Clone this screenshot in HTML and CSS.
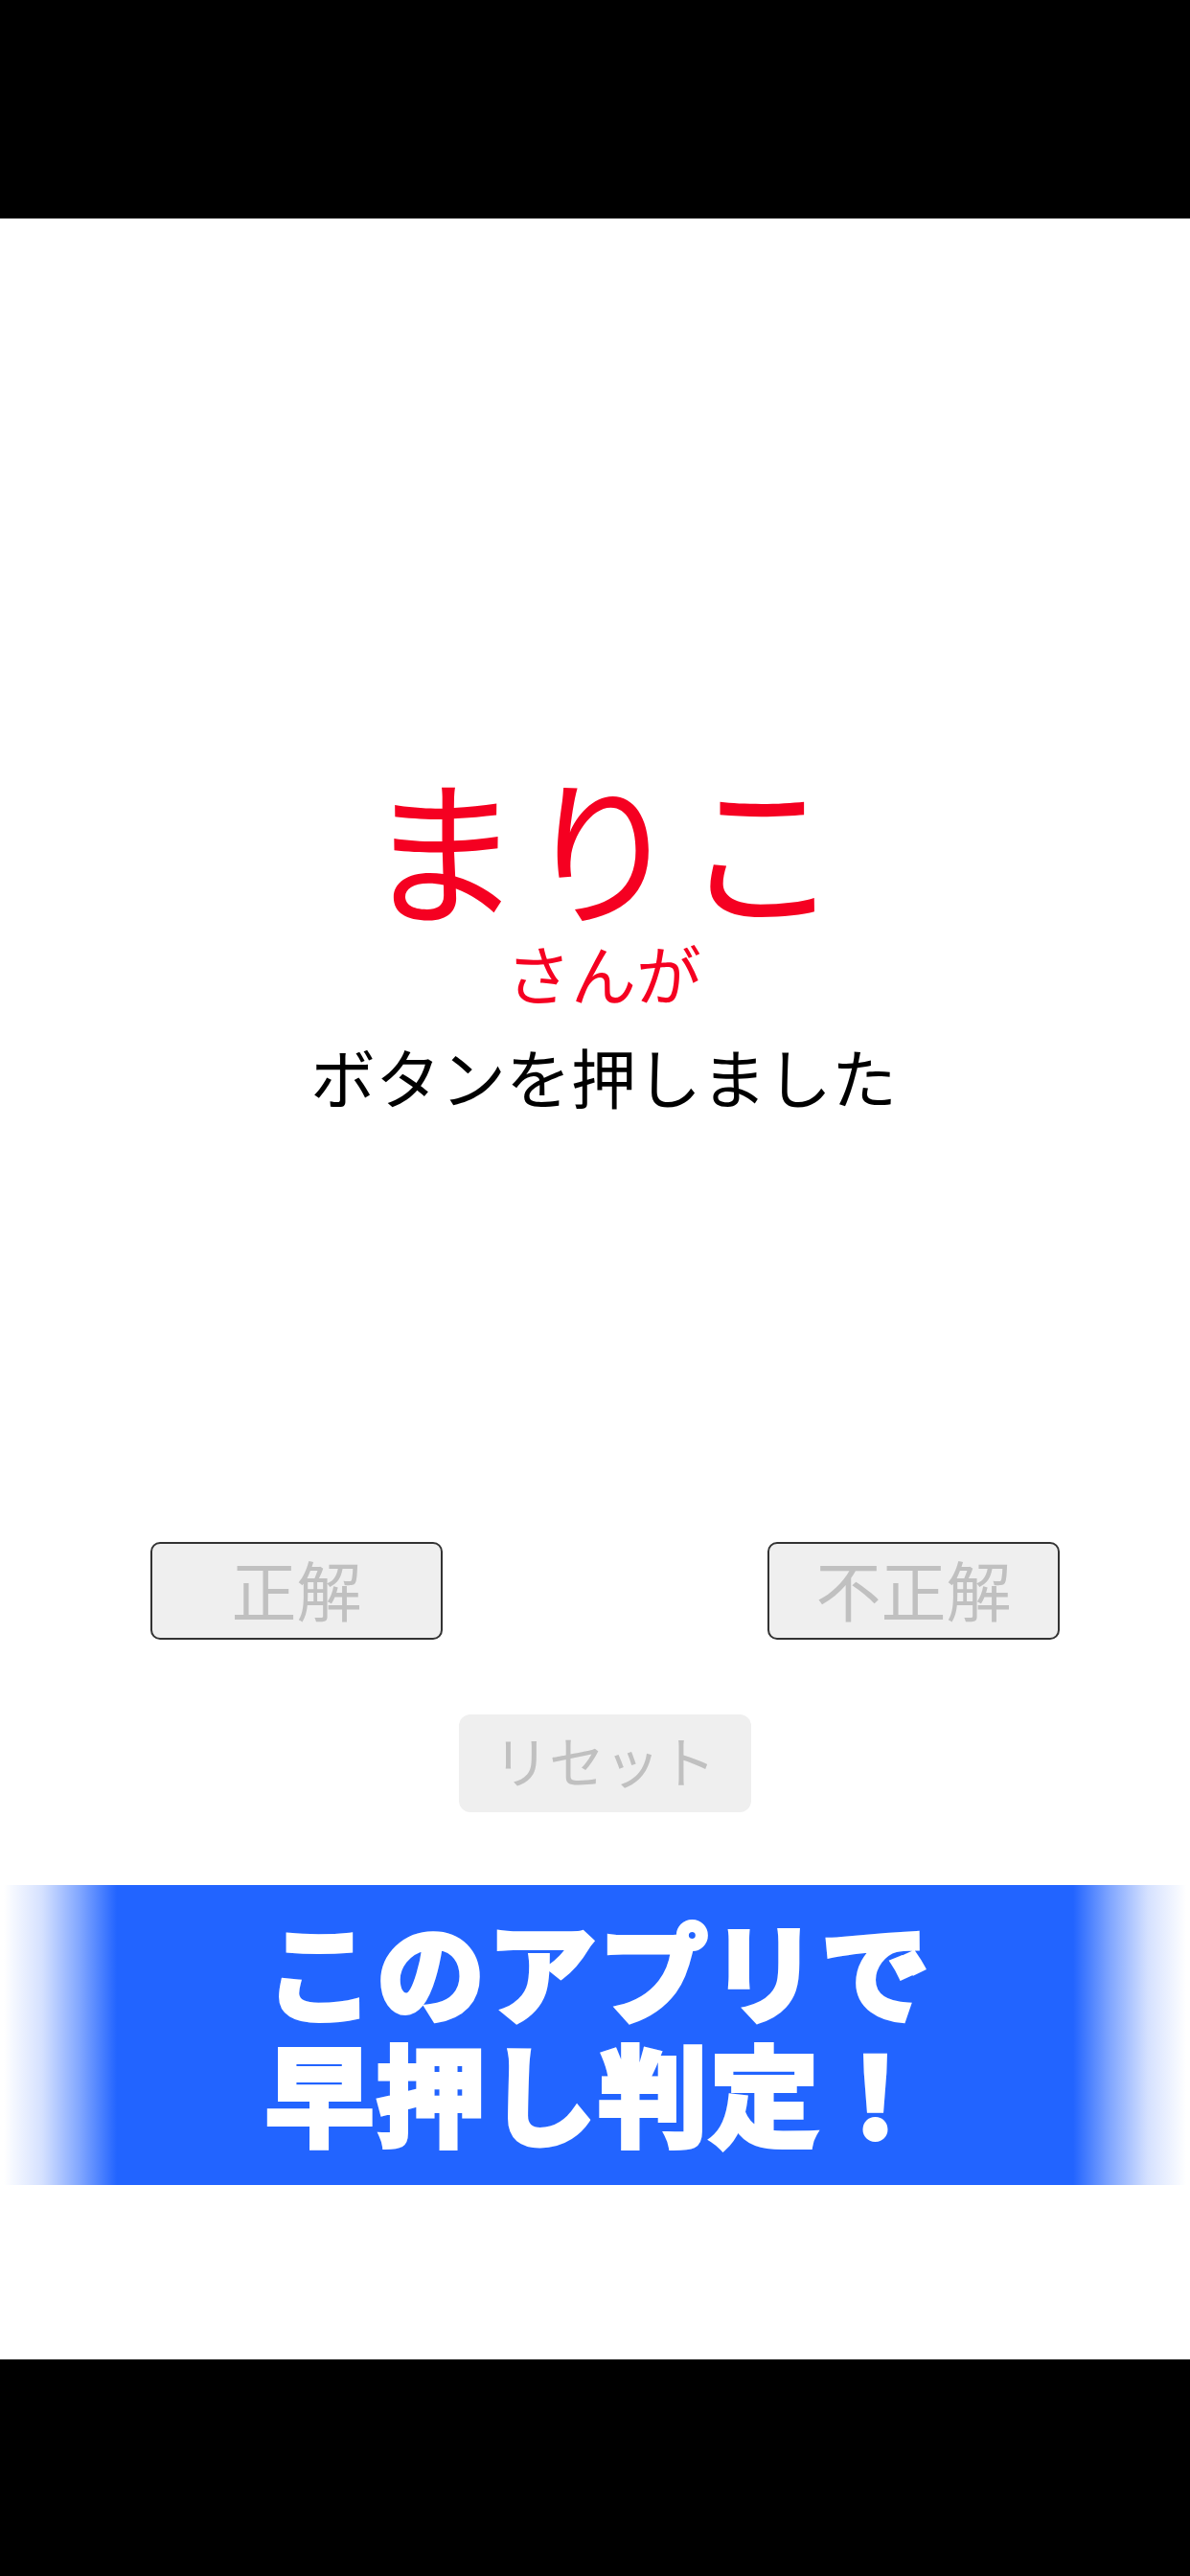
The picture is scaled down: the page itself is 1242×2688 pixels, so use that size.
FILE: index.html
```html
<!DOCTYPE html>
<html lang="ja">
<head>
  <meta charset="utf-8">
  <meta name="viewport" content="width=device-width, initial-scale=1.0">
  <title>早押し判定</title>
  <link rel="stylesheet" href="styles.css">
</head>
<body>
  <div class="black-bar top"></div>

  <main>
    <section class="result">
      <p class="player-name">まりこ</p>
      <p class="player-suffix">さんが</p>
      <p class="result-message">ボタンを押しました</p>
    </section>

    <section class="judge-buttons">
      <button class="judge" disabled>正解</button>
      <button class="judge" disabled>不正解</button>
    </section>

    <section class="reset-row">
      <button class="reset" disabled>リセット</button>
    </section>

    <section class="banner">
      <p>このアプリで<br>早押し判定！</p>
    </section>
  </main>

  <div class="black-bar bottom"></div>
</body>
</html>
```

FILE: styles.css
```css
* {
  box-sizing: border-box;
}

body {
  margin: 0;
  width: 1242px;
  height: 2688px;
  display: flex;
  flex-direction: column;
  background-color: #fff;
  font-family: "Noto Sans CJK JP", "Noto Sans", sans-serif;
}

.black-bar {
  background-color: #000;
}

.black-bar.top {
  height: 228px;
}

.black-bar.bottom {
  height: 226px;
}

main {
  flex: 1;
  display: flex;
  flex-direction: column;
}

p {
  margin: 0;
}

.result {
  padding-top: 558px;
  padding-left: 18px;
  text-align: center;
}

.player-name {
  font-size: 164px;
  letter-spacing: 2px;
  line-height: 190px;
  color: #f50021;
}

.player-suffix {
  font-size: 68px;
  line-height: 78px;
  color: #f50021;
}

.result-message {
  margin-top: 20px;
  font-size: 68px;
  line-height: 98px;
  color: #000;
}

.judge-buttons {
  display: flex;
  justify-content: space-between;
  margin-top: 437px;
  padding: 0 136px 0 157px;
}

button {
  width: 305px;
  height: 102px;
  padding: 0 0 4px;
  background-color: #efefef;
  color: #c0c0c0;
  font-family: inherit;
  font-size: 68px;
  line-height: 1;
}

.judge {
  border: 2px solid #333;
  border-radius: 10px;
}

.reset-row {
  display: flex;
  justify-content: center;
  margin-top: 78px;
  padding-left: 20px;
}

.reset {
  padding-bottom: 8px;
  border: none;
  border-radius: 12px;
  font-size: 58px;
}

.banner {
  height: 313px;
  margin-top: 76px;
  padding: 0 0 14px 8px;
  display: flex;
  align-items: center;
  justify-content: center;
  background: linear-gradient(to right, #fff 4px, #d5e1ff 44px, #7fa5ff 84px, #2264ff 122px, #2264ff 1120px, #7fa5ff 1158px, #d5e1ff 1198px, #fff 1238px);
}

.banner p {
  font-size: 113px;
  font-weight: 700;
  letter-spacing: 3px;
  line-height: 128px;
  color: #fff;
  text-align: center;
  -webkit-text-stroke: 6px #fff;
}
```
